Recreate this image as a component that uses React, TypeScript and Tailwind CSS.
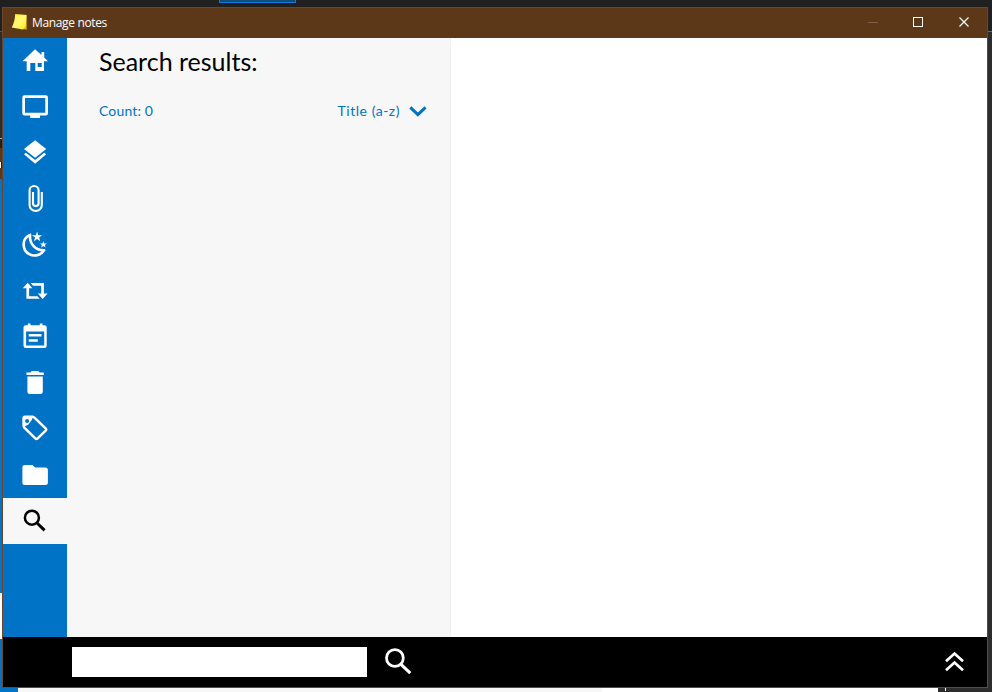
import React from "react";

type IconProps = { children: React.ReactNode; active?: boolean };

function NavItem({ children, active = false }: IconProps) {
  return (
    <button
      className={
        active
          ? "block h-[46px] w-16 shrink-0 bg-[#f7f7f7] text-black"
          : "block h-[46px] w-16 shrink-0 text-white"
      }
    >
      <svg width="64" height="46" viewBox="0 0 64 46" fill="currentColor" className="block">
        {children}
      </svg>
    </button>
  );
}

function Sidebar() {
  return (
    <nav className="flex w-16 shrink-0 flex-col bg-[#0173c7]">
      <NavItem>
        <path
          fillRule="evenodd"
          d="M32 11.3 38.5 17V14H41.2V19.5L45 23.2H41V33H23.7V23.2H19.5ZM27.3 25V33H32.3V25ZM34.7 25V29H38.7V25Z"
        />
      </NavItem>
      <NavItem>
        <path
          fillRule="evenodd"
          d="M21.5 11.2H42.8Q45 11.2 45 13.4V29.3Q45 31.5 42.8 31.5H37V34H27.2V31.5H21.5Q19.3 31.5 19.3 29.3V13.4Q19.3 11.2 21.5 11.2ZM22 13.9V28.8H42.3V13.9Z"
        />
      </NavItem>
      <NavItem>
        <path d="M32.1 10.2 43.2 19 32.1 27.7 21 19Z" />
        <path d="M21 24.2 22.9 22.8 32.1 30 41.2 22.8 43.2 24.2 32.1 33.8Z" />
      </NavItem>
      <NavItem>
        <path
          fill="none"
          stroke="currentColor"
          strokeWidth="2.1"
          d="M38.8 16.1V29.2A6.1 5.8 0 0 1 26.6 29.2V14.4A4.5 4.4 0 0 1 35.6 14.4V27.3A2.8 2.8 0 0 1 30 27.3V16.1"
        />
      </NavItem>
      <NavItem>
        <path
          fill="none"
          stroke="currentColor"
          strokeWidth="2.6"
          strokeLinejoin="round"
          d="M27.1 12.9C18.4 16.5 18.7 28.6 26.7 32.4C32.2 34.9 38.6 32.7 41.2 28.2C32.9 28.6 26 21.8 27.1 12.9Z"
        />
        <path d="M34.1 9.6 35.3 13.2H39.1L36.1 15.6 37.3 19.2 34.1 17 30.9 19.2 32.1 15.6 29 13.2H32.9Z" />
        <path d="M40.4 19 41.3 21.4H43.8L41.8 23 42.6 25.6 40.4 24.1 38.2 25.6 38.9 23 36.9 21.4H39.6Z" />
      </NavItem>
      <NavItem>
        <path d="M24.7 14.8 29.4 20.3H26.1V28.2H34.4L36.8 30.7H23.4V20.3H19.8ZM27.6 15.1H40.9V25.5H44.6L39.6 31.1 34.8 25.5H38.2V17.7H30Z" />
      </NavItem>
      <NavItem>
        <path
          fillRule="evenodd"
          d="M24.8 9.4H27.5V11.2H36.8V9.4H39.5V11.2H41.5Q43.7 11.2 43.7 13.4V31.4Q43.7 34 41.5 34H22.8Q20.5 34 20.5 31.4V13.4Q20.5 11.2 22.8 11.2H24.8ZM23.1 17.4V31.4H41.2V17.4ZM25.7 20V22.6H38.5V20ZM25.7 25.2V27.8H34.8V25.2Z"
        />
      </NavItem>
      <NavItem>
        <path d="M28.7 11.1H35.4L36.7 12.4H40.8V15.1H23.4V12.4H27.4ZM24.4 16.4H39.8V31.8Q39.8 34 37.5 34H26.7Q24.4 34 24.4 31.8Z" />
      </NavItem>
      <NavItem>
        <path
          fill="none"
          stroke="currentColor"
          strokeWidth="2.5"
          strokeLinejoin="round"
          d="M22 10.7H29.4L31.4 11.6 42.9 22.7Q43.7 23.5 42.9 24.4L34.4 32.6Q33.4 33.4 32.5 32.6L21.3 21.6Q20.6 20.8 20.6 19.5V12.3Q20.6 10.7 22 10.7Z"
        />
        <path d="M20.6 18V10.7H30L28.4 14.5 25.4 18.5 21.5 20.4Z" />
        <circle cx="24.1" cy="14.9" r="2" fill="#0173c7" />
      </NavItem>
      <NavItem>
        <path d="M22.1 12.9H29.6L32.1 15.4H42.3Q44.9 15.4 44.9 18V31Q44.9 33.1 42.3 33.1H22.1Q19.4 33.1 19.4 31V15.3Q19.4 12.9 22.1 12.9Z" />
      </NavItem>
      <NavItem active>
        <circle cx="28.9" cy="19.7" r="7" fill="none" stroke="currentColor" strokeWidth="2.5" />
        <path d="M33.5 24.5 41.6 32.3" fill="none" stroke="currentColor" strokeWidth="3" />
      </NavItem>
    </nav>
  );
}

function TitleBar() {
  return (
    <header className="flex h-[30px] shrink-0 items-center bg-[#5c3819] text-white">
      <svg width="29" height="30" viewBox="0 0 29 30" className="shrink-0">
        <defs>
          <linearGradient id="note" x1="0" y1="0" x2="1" y2="1">
            <stop offset="0" stopColor="#fff33a" />
            <stop offset=".55" stopColor="#fff979" />
            <stop offset="1" stopColor="#ffe500" />
          </linearGradient>
        </defs>
        <path d="m12 6.3 11.7.7-.1 14.6-4.4-.5Z" fill="#e3bd00" />
        <path d="M12.2 6.2 23.4 7 22.8 18 20 21.5 8.7 19.4Q11.8 14 12.2 6.2Z" fill="url(#note)" />
      </svg>
      <span className="h-5 w-[90px] whitespace-nowrap font-['Open_Sans','Noto_Sans',sans-serif] text-[12px] leading-5 tracking-[-0.35px]">
        Manage notes
      </span>
      <svg width="138" height="30" viewBox="0 0 138 30" fill="none" className="ml-auto block" shapeRendering="crispEdges">
        <path d="M19 14.5H29" stroke="#7d6047" />
        <rect x="64.5" y="9.5" width="9" height="9" stroke="white" />
        <path d="m110.5 9.5 9 9m0-9-9 9" stroke="white" strokeWidth="1.2" shapeRendering="auto" />
      </svg>
    </header>
  );
}

function ResultsPanel() {
  return (
    <section className="flex w-[384px] shrink-0 flex-col border-r border-[#f2f2f2] bg-[#f7f7f7] pl-8 pt-[5px] font-['Lato','Open_Sans',sans-serif]">
      <h1 className="h-9 whitespace-nowrap text-[25px] leading-9 text-black">Search results:</h1>
      <div className="mt-5 flex h-6 w-[328px] items-center justify-between text-[14px] leading-6 text-[#0173c7]">
        <span className="tracking-[0.15px]">Count: 0</span>
        <button className="flex h-6 items-center gap-[9px]">
          <span className="whitespace-nowrap tracking-[0.55px]">Title (a-z)</span>
          <svg width="18" height="12" viewBox="0 0 18 12" fill="none" stroke="currentColor" strokeWidth="3">
            <path d="m1.3 2.4 7.6 7.2 7.6-7.2" />
          </svg>
        </button>
      </div>
    </section>
  );
}

function SearchBar() {
  return (
    <footer className="flex h-[50px] shrink-0 items-center bg-black pl-[69px] text-white">
      <input aria-label="Search" className="h-[30px] w-[295px] bg-white px-2 text-black outline-none" />
      <svg width="46" height="50" viewBox="0 0 46 50" fill="none" stroke="currentColor" className="ml-[7px]">
        <circle cx="20.9" cy="21" r="8.4" strokeWidth="2.8" />
        <path d="m27 27.3 9.3 8.8" strokeWidth="3.2" />
      </svg>
      <svg width="24" height="50" viewBox="0 0 24 50" fill="none" stroke="currentColor" strokeWidth="2.7" className="ml-auto mr-5">
        <path d="m3 24.2 8.5-7.7 8.5 7.7M3 33.2l8.5-7.7 8.5 7.7" />
      </svg>
    </footer>
  );
}

export default function App() {
  return (
    <div className="flex h-[692px] w-[992px] flex-col overflow-hidden bg-[#202020]">
      <div className="h-[7px] shrink-0 pl-[219px]">
        <div className="h-[3px] w-[77px] border-x border-b border-[#0f7bdc] bg-[#144a78]" />
      </div>
      <div className="flex h-[681px] shrink-0">
        <div className="flex w-[2px] shrink-0 flex-col">
          <div className="h-6 bg-[#202020]" />
          <div className="h-px bg-[#555555]" />
          <div className="h-[106px] bg-[#2b2b2b]" />
          <div className="h-px bg-[#b0b0b0]" />
          <div className="h-[9px] bg-[#202020]" />
          <div className="h-[14px] bg-[#5c3819]" />
          <div className="h-[6px] w-px bg-white" />
          <div className="h-[11px] bg-[#5c3819]" />
          <div className="h-[414px] bg-[#0173c7]" />
          <div className="h-[46px] bg-white" />
          <div className="flex-1 bg-[#0173c7]" />
        </div>
        <main className="flex w-[986px] shrink-0 flex-col border border-[#6c452a] bg-white">
          <TitleBar />
          <div className="flex h-[599px] shrink-0">
            <Sidebar />
            <ResultsPanel />
            <div className="flex-1 bg-white" />
          </div>
          <SearchBar />
        </main>
        <div className="flex w-1 shrink-0 flex-col">
          <div className="h-6 bg-[#202020]" />
          <div className="h-px bg-[#6a6a6a]" />
          <div className="flex-1 bg-[#2d2d2d]" />
        </div>
      </div>
      <div className="flex h-1 shrink-0">
        <div className="w-[18px] bg-[#0173c7]" />
        <div className="w-[584px] bg-[#f7f7f7]" />
        <div className="w-[336px] bg-white" />
        <div className="flex-1 bg-[#2d2d2d] pl-[7px]">
          <div className="h-[3px] w-px bg-white" />
        </div>
      </div>
    </div>
  );
}
